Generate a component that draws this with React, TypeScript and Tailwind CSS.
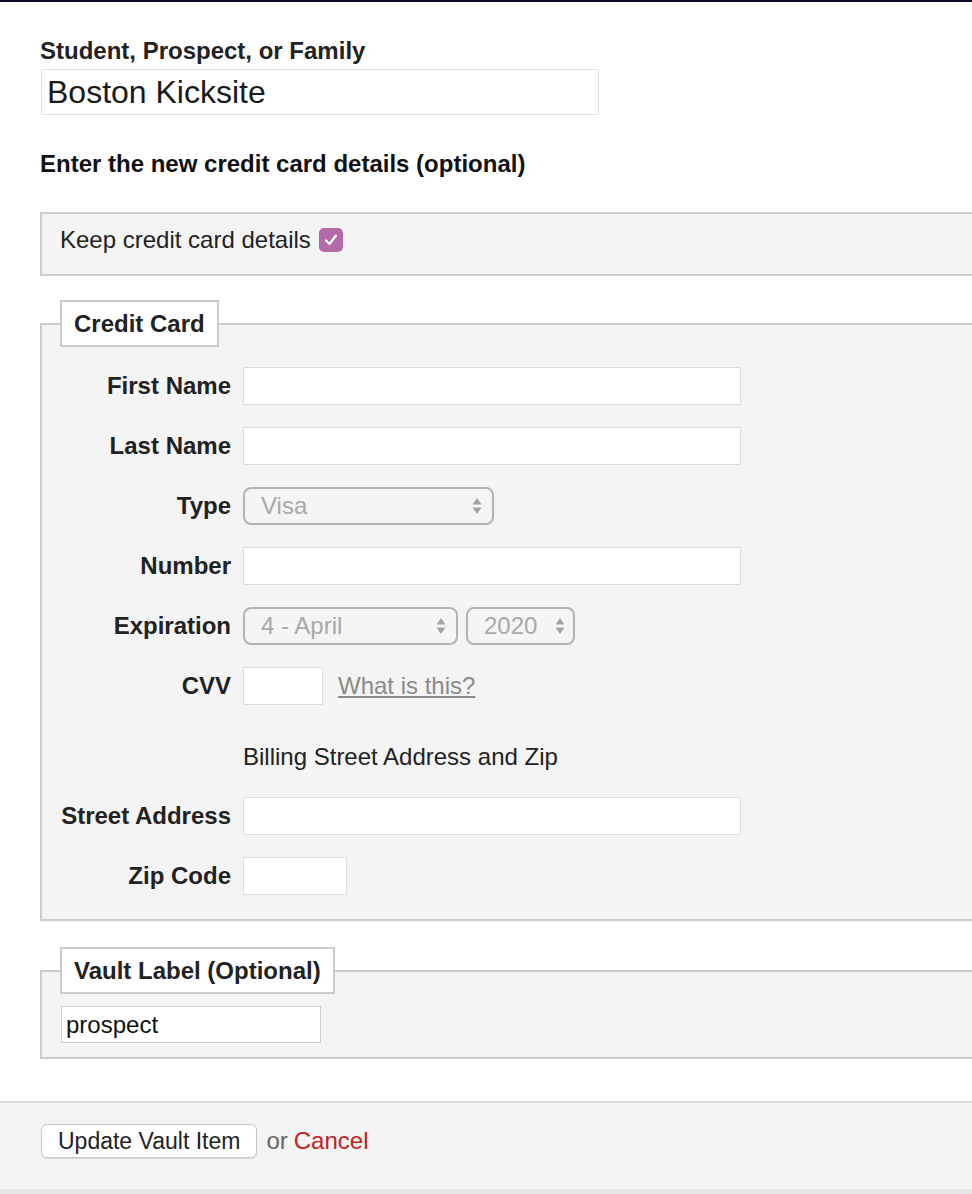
import * as React from "react";

const Arrows: React.FC = () => (
  <svg width="10" height="20" viewBox="0 0 10 20" className="shrink-0">
    <path d="M5 2 L9.5 8.5 H0.5 Z" fill="#a3a3a3" />
    <path d="M5 18 L9.5 11.5 H0.5 Z" fill="#a3a3a3" />
  </svg>
);

const FakeSelect: React.FC<{ value: string; width: string; pr: string }> = ({
  value,
  width,
  pr,
}) => (
  <div
    className={`${width} ${pr} h-[38px] flex items-center justify-between pl-[16px] rounded-[8px] border-2 border-[#b4b4b4] bg-[#f5f5f5] text-[#a8a8a8] text-[24px] leading-[28px]`}
  >
    <span>{value}</span>
    <Arrows />
  </div>
);

const Row: React.FC<{ label: string; children: React.ReactNode; mt?: string }> = ({
  label,
  children,
  mt = "mt-[22px]",
}) => (
  <div className={`flex items-center h-[38px] ${mt}`}>
    <label className="w-[189px] text-right font-bold text-[24px] leading-[28px] text-[#222]">
      {label}
    </label>
    <div className="ml-[12px] flex items-center gap-[8px]">{children}</div>
  </div>
);

const TextBox: React.FC<{ width: string }> = ({ width }) => (
  <div className={`${width} h-[38px] bg-white border border-[#dedede]`} />
);

const App: React.FC = () => {
  return (
    <div className="min-h-screen bg-white overflow-hidden font-['Liberation_Sans',Arial,sans-serif] text-[#222]">
      <div className="h-[2px] bg-[#0e0b2a]" />

      <div className="pl-10">
        {/* Family lookup */}
        <label className="block mt-[35px] font-bold text-[24px] leading-[28px]">
          Student, Prospect, or Family
        </label>
        <div className="mt-[4px] ml-[1px] w-[558px] h-[46px] border border-[#dedede] bg-white flex items-center px-[5px] text-[32px] leading-[36px] text-[#1a1a1a]">
          Boston Kicksite
        </div>

        <h3 className="mt-[35px] font-bold text-[24px] leading-[28px] text-[#111]">
          Enter the new credit card details (optional)
        </h3>

        {/* Keep details */}
        <div className="mt-[34px] w-[1000px] h-[64px] border-2 border-[#cccccc] bg-[#f4f4f4] pl-[18px] pt-[12px]">
          <div className="flex items-center text-[24px] leading-[28px] text-[#222]">
            <span>Keep credit card details</span>
            <span className="ml-[8px] w-[24px] h-[24px] rounded-[5px] bg-[#b46aa8] flex items-center justify-center">
              <svg width="16" height="16" viewBox="0 0 16 16">
                <path
                  d="M3 8.5 L6.5 12 L13 3.5"
                  fill="none"
                  stroke="white"
                  strokeWidth="2.2"
                  strokeLinecap="round"
                  strokeLinejoin="round"
                />
              </svg>
            </span>
          </div>
        </div>

        {/* Credit card fieldset */}
        <fieldset className="mt-[24px] w-[1000px] border-2 border-[#cccccc] bg-[#f4f4f4] pb-[24px]">
          <legend className="ml-[18px] bg-white border-2 border-[#cccccc] px-[12px] pt-[8px] pb-[7px] font-bold text-[24px] leading-[28px] text-[#222]">
            Credit Card
          </legend>

          <Row label="First Name" mt="mt-[20px]">
            <TextBox width="w-[498px]" />
          </Row>
          <Row label="Last Name">
            <TextBox width="w-[498px]" />
          </Row>
          <Row label="Type">
            <FakeSelect value="Visa" width="w-[251px]" pr="pr-[10px]" />
          </Row>
          <Row label="Number">
            <TextBox width="w-[498px]" />
          </Row>
          <Row label="Expiration">
            <FakeSelect value="4 - April" width="w-[215px]" pr="pr-[10px]" />
            <FakeSelect value="2020" width="w-[109px]" pr="pr-[8px]" />
          </Row>
          <Row label="CVV">
            <TextBox width="w-[80px]" />
            <a className="ml-[7px] text-[24px] leading-[28px] text-[#8a8a8a] underline underline-offset-2">
              What is this?
            </a>
          </Row>

          <div className="mt-[38px] ml-[201px] text-[24px] leading-[28px] text-[#222]">
            Billing Street Address and Zip
          </div>

          <Row label="Street Address" mt="mt-[26px]">
            <TextBox width="w-[498px]" />
          </Row>
          <Row label="Zip Code">
            <TextBox width="w-[104px]" />
          </Row>
        </fieldset>

        {/* Vault label */}
        <fieldset className="mt-[26px] w-[1000px] border-2 border-[#cccccc] bg-[#f4f4f4] pb-[14px]">
          <legend className="ml-[18px] bg-white border-2 border-[#cccccc] px-[12px] pt-[8px] pb-[7px] font-bold text-[24px] leading-[28px] text-[#222]">
            Vault Label (Optional)
          </legend>
          <div className="mt-[12px] ml-[19px] w-[260px] h-[37px] bg-white border border-[#cfcfcf] flex items-center pl-[4px] text-[24px] leading-[28px] text-[#111]">
            prospect
          </div>
        </fieldset>
      </div>

      {/* Actions */}
      <div className="mt-[42px] border-t-2 border-[#dddddd] bg-[#f4f4f4] pt-[21px] pb-[31px] pl-[41px] flex items-center">
        <button className="h-[34px] px-[16px] rounded-[6px] border border-[#c8c8c8] bg-white shadow-[0_1px_1px_rgba(0,0,0,0.12)] text-[23px] leading-[26px] text-[#222]">
          Update Vault Item
        </button>
        <span className="ml-[9px] text-[24px] leading-[28px] text-[#666]">or</span>
        <a className="ml-[6px] text-[24px] leading-[28px] text-[#c4221e]">Cancel</a>
      </div>
      <div className="h-[6px] bg-[#e6e6e6]" />
    </div>
  );
};

export default App;
